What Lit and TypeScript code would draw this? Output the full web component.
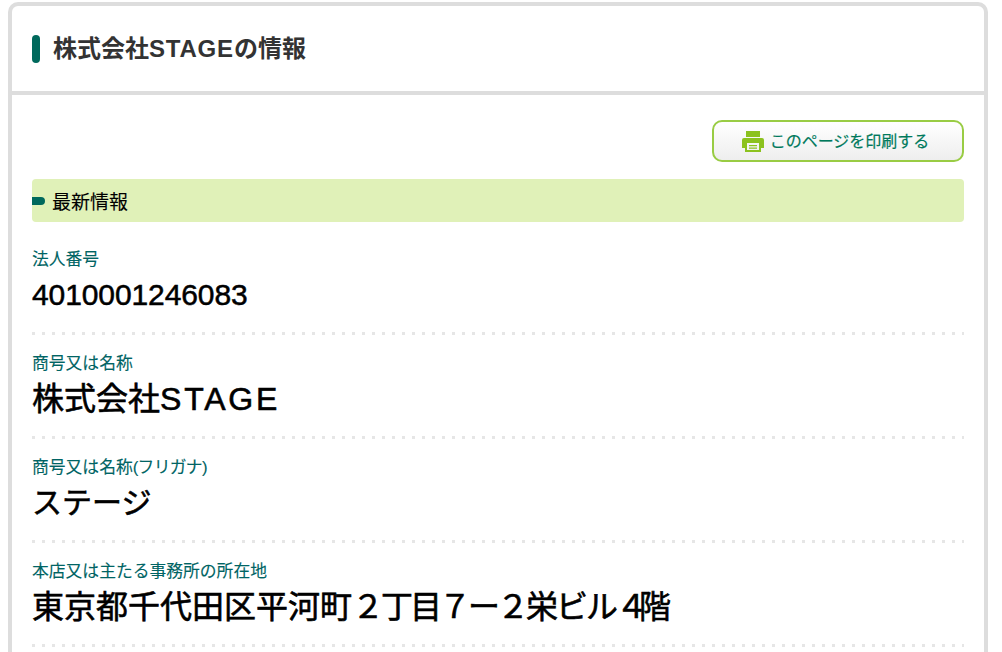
import { LitElement, html, css } from "lit";
import { customElement } from "lit/decorators.js";

@customElement("app-root")
export class AppRoot extends LitElement {
  static styles = css`
    :host {
      display: block;
      height: 652px;
      overflow: hidden;
      background: #fff;
      font-family: "Liberation Sans", "Noto Sans CJK JP", sans-serif;
      padding: 2px 14px 0 8px;
      box-sizing: border-box;
    }
    .panel {
      border: 4px solid #ddd;
      border-bottom: none;
      border-radius: 10px 10px 0 0;
      height: 700px;
    }
    .head {
      height: 89px;
      box-sizing: border-box;
      border-bottom: 4px solid #ddd;
      padding: 0 20px;
      display: flex;
      align-items: center;
      gap: 13px;
      color: #333;
      font-size: 24px;
      font-weight: bold;
    }
    .head i {
      width: 8px;
      height: 28px;
      border-radius: 4px;
      background: #00695c;
    }
    .head span {
      padding-bottom: 5px;
    }
    .head b {
      letter-spacing: 0.8px;
    }
    .body {
      padding: 25px 20px 0;
    }
    .tools {
      display: flex;
      justify-content: flex-end;
    }
    .print {
      width: 252px;
      height: 42px;
      box-sizing: border-box;
      border: 2px solid #99cc44;
      border-radius: 10px;
      background: linear-gradient(#fff, #eee);
      display: flex;
      align-items: center;
      justify-content: center;
      gap: 6px;
      padding-right: 5px;
      color: #00795c;
      font-size: 16px;
      -webkit-text-stroke: 0.2px #00795c;
    }
    .print span {
      padding-bottom: 2px;
    }
    .print svg {
      width: 22px;
      height: 21px;
    }
    .sub {
      margin-top: 17px;
      height: 43px;
      border-radius: 4px;
      background: #e0f1b8;
      display: flex;
      align-items: center;
      gap: 7px;
      font-size: 19px;
      color: #000;
      -webkit-text-stroke: 0.1px #000;
    }
    .sub i {
      width: 13px;
      height: 8px;
      border-radius: 0 4px 4px 0;
      background: #00695c;
    }
    .row {
      height: 104px;
      box-sizing: border-box;
      padding-top: 19px;
      background: linear-gradient(90deg, #e6e6e6 3px, transparent 3px) left bottom / 10px 3px repeat-x;
    }
    .first {
      height: 113px;
      padding-top: 28px;
    }
    .label {
      font-size: 16.8px;
      line-height: 20px;
      color: #006464;
      -webkit-text-stroke: 0.12px #006464;
    }
    .paren {
      letter-spacing: -0.7px;
    }
    .value {
      margin-top: 5px;
      font-size: 32px;
      line-height: 40px;
      color: #000;
      white-space: nowrap;
      -webkit-text-stroke: 0.6px #000;
    }
    .num {
      font-size: 30px;
      letter-spacing: -0.1px;
      -webkit-text-stroke: 0.5px #000;
    }
    .latin {
      letter-spacing: 2.8px;
    }
    .kana {
      font-size: 30px;
    }
    .tight {
      letter-spacing: -3px;
    }
    .mid {
      letter-spacing: -2px;
    }
    .four {
      letter-spacing: -9px;
    }
  `;

  render() {
    return html`
      <div class="panel">
        <div class="head"><i></i><span>株式会社<b>STAGE</b>の情報</span></div>
        <div class="body">
          <div class="tools">
            <div class="print">
              <svg viewBox="0 0 22 21"><path fill="#8cc21f" fill-rule="evenodd" d="M4 0h14v6H4zM2 7h18a2 2 0 0 1 2 2v8h-3v4H3v-4H0V9a2 2 0 0 1 2-2zM5 12v7h12v-7zM7 14h8v1.2H7zM7 16.5h8v1.2H7z"/></svg>
              <span>このページを印刷する</span>
            </div>
          </div>
          <div class="sub"><i></i><span>最新情報</span></div>
          <div class="row first">
            <div class="label">法人番号</div>
            <div class="value num">4010001246083</div>
          </div>
          <div class="row">
            <div class="label">商号又は名称</div>
            <div class="value">株式会社<span class="latin">STAGE</span></div>
          </div>
          <div class="row">
            <div class="label">商号又は名称<span class="paren">(フリガナ)</span></div>
            <div class="value kana">ステージ</div>
          </div>
          <div class="row">
            <div class="label">本店又は主たる事務所の所在地</div>
            <div class="value">東京都千代田区平河町<span class="tight">２丁目７ー２</span><span class="mid">栄ビル</span><span class="four">４</span>階</div>
          </div>
        </div>
      </div>
    `;
  }
}
